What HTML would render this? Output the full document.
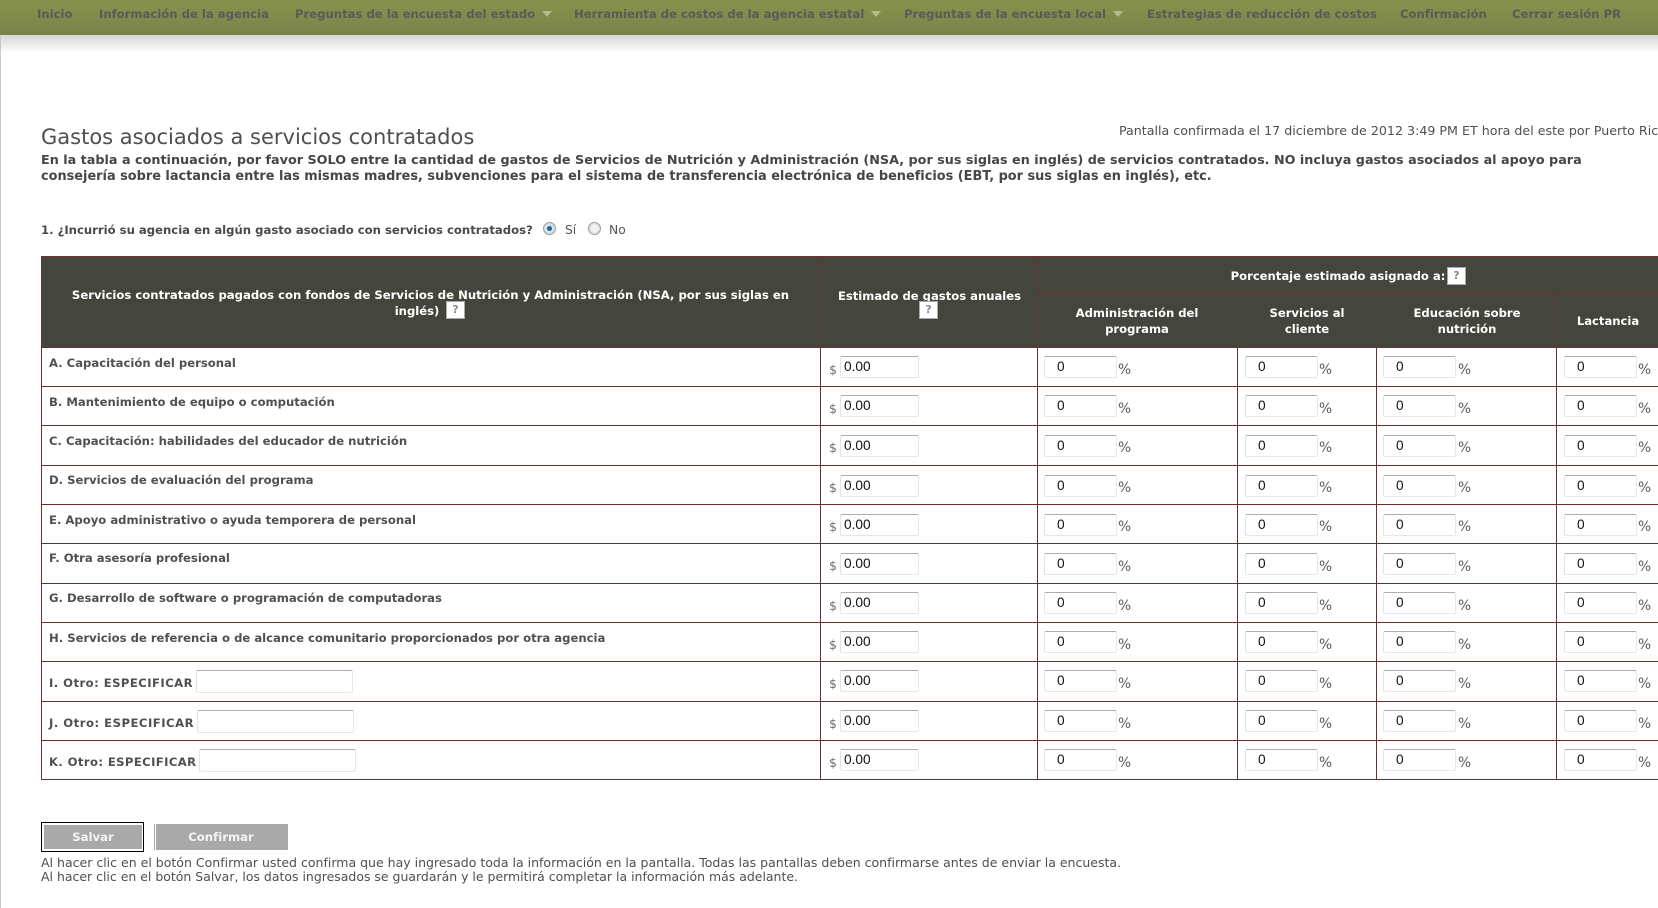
<!DOCTYPE html>
<html lang="es">
<head>
<meta charset="utf-8">
<title>Gastos asociados a servicios contratados</title>
<style>
html,body{margin:0;padding:0;background:#fff;}
body{width:1658px;height:908px;overflow:hidden;position:relative;font-family:"DejaVu Sans",Verdana,sans-serif;color:#4c4c4c;}
.a{position:absolute;white-space:nowrap;}
#edge{position:absolute;left:0;top:36px;width:1px;height:872px;background:#c8c8c8;}
#nav{position:absolute;left:0;top:0;width:1658px;height:35px;background:linear-gradient(#87934c,#79834a);}
#navline{position:absolute;left:0;top:35px;width:1658px;height:1px;background:#d9dcbc;}
#shadow{position:absolute;left:0;top:36px;width:1658px;height:17px;background:linear-gradient(#d8d8d8,#fff);}
.n{position:absolute;top:6px;font-size:11.65px;line-height:16px;font-weight:bold;color:#5a5a58;white-space:nowrap;}
.t{position:absolute;top:11px;width:0;height:0;border-left:5.5px solid transparent;border-right:5.5px solid transparent;border-top:6px solid #b4ba8c;}
h1{position:absolute;left:41px;top:125px;margin:0;font-size:21px;line-height:24px;font-weight:normal;color:#4f4f4f;white-space:nowrap;}
.b{font-weight:bold;line-height:16px;color:#464646;}
#head{position:absolute;left:41px;top:256px;width:1617px;height:92px;background:#44463d;border-top:1px solid #6b3030;box-sizing:border-box;}
.h{position:absolute;color:#fff;font-weight:bold;font-size:11.6px;line-height:16px;text-align:center;white-space:nowrap;transform:translateX(-50%);}
.q{position:absolute;width:19px;height:18px;background:#fff;border:1px solid #aaa;box-sizing:border-box;color:#8a8a8a;font-size:11px;font-weight:bold;line-height:16px;text-align:center;}
.hl{position:absolute;background:#6b3030;}
.r{position:absolute;left:41px;width:1617px;border-bottom:1px solid #6b3030;box-sizing:border-box;}
.l{position:absolute;left:8px;top:7px;font-size:11.63px;line-height:16px;font-weight:bold;color:#505050;white-space:nowrap;}
input{position:absolute;box-sizing:border-box;margin:0;height:22px;border:1px solid #e3e7ee;border-top-color:#abadb3;border-left-color:#e2e3ea;border-radius:2px;background:#fff;font-family:"Liberation Sans",Arial,sans-serif;font-size:13.7px;color:#111;outline:none;}
.d{left:799px;width:79px;padding:0 0 1px 3px;top:8px;}
.p{width:73px;padding:0 0 1px 12px;top:8px;}
.u input{top:9px;}
.f6 .s{top:15px;}
.f6 .c{top:16px;}
.p1{left:1003px;}.p2{left:1204px;}.p3{left:1342px;}.p4{left:1523px;}
.s{position:absolute;left:788px;top:15px;font-size:12.5px;line-height:14px;color:#6a6f78;font-style:normal;}
.c{position:absolute;top:15px;font-size:13.8px;line-height:14px;color:#5a5a5a;font-style:normal;}
.c1{left:1077px;}.c2{left:1278px;}.c3{left:1417px;}.c4{left:1597px;}
.x{position:absolute;top:8px;height:23px;width:157px;padding:0;}
.o{position:absolute;top:13px;left:8px;font-size:11.63px;line-height:16px;font-weight:bold;color:#505050;white-space:nowrap;}
.vl{position:absolute;width:1px;background:#6b3030;top:348px;height:432px;}
.btn{position:absolute;background:#a9a9a9;color:#f4f4f4;font-weight:bold;font-size:11.7px;text-align:center;box-sizing:border-box;}
.rad{position:absolute;width:13px;height:13px;border-radius:50%;box-sizing:border-box;border:1px solid #9a9ea3;background:radial-gradient(circle,#f4f4f4 35%,#c4c8cb 100%);}
.rad.on{background:radial-gradient(circle,#0f5f9c 0,#1b76b8 30%,#dfe6ea 36%,#c8ccd0 100%);}
.f{line-height:14px;color:#4f4f4f;}
</style>
</head>
<body>
<div id="shadow"></div>
<div id="edge"></div>
<div id="nav"></div>
<div id="navline"></div>
<span class="n" style="left:37px">Inicio</span>
<span class="n" style="left:99px">Información de la agencia</span>
<span class="n" style="left:295px">Preguntas de la encuesta del estado</span>
<span class="t" style="left:542px"></span>
<span class="n" style="left:574px">Herramienta de costos de la agencia estatal</span>
<span class="t" style="left:871px"></span>
<span class="n" style="left:904px">Preguntas de la encuesta local</span>
<span class="t" style="left:1113px"></span>
<span class="n" style="left:1147px">Estrategias de reducción de costos</span>
<span class="n" style="left:1400px">Confirmación</span>
<span class="n" style="left:1512px">Cerrar sesión PR</span>

<h1>Gastos asociados a servicios contratados</h1>
<div class="a" style="left:1119px;top:123px;font-size:12.65px;line-height:16px;color:#4f4f4f;">Pantalla confirmada el 17 diciembre de 2012 3:49 PM ET hora del este por Puerto Rico</div>
<div class="a b" style="left:41px;top:153px;font-size:12.77px;">En la tabla a continuación, por favor SOLO entre la cantidad de gastos de Servicios de Nutrición y Administración (NSA, por sus siglas en inglés) de servicios contratados. NO incluya gastos asociados al apoyo para</div>
<div class="a b" style="left:41px;top:169px;font-size:12.88px;">consejería sobre lactancia entre las mismas madres, subvenciones para el sistema de transferencia electrónica de beneficios (EBT, por sus siglas en inglés), etc.</div>

<div class="a" style="left:41px;top:222px;font-size:11.65px;line-height:16px;font-weight:bold;color:#4a4a4a;">1. ¿Incurrió su agencia en algún gasto asociado con servicios contratados?</div>
<span class="rad on" style="left:543px;top:222px"></span>
<span class="a" style="left:565px;top:222px;font-size:12.3px;line-height:16px;color:#555;">Sí</span>
<span class="rad" style="left:588px;top:222px"></span>
<span class="a" style="left:609px;top:222px;font-size:12.3px;line-height:16px;color:#555;">No</span>

<div id="head"></div>
<div class="hl" style="left:41px;top:256px;width:1px;height:524px"></div>
<div class="hl" style="left:820px;top:256px;width:1px;height:92px"></div>
<div class="hl" style="left:1037px;top:256px;width:1px;height:92px"></div>
<div class="hl" style="left:1037px;top:293px;width:621px;height:1px"></div>
<div class="hl" style="left:1556px;top:293px;width:1px;height:55px"></div>
<div class="hl" style="left:41px;top:347px;width:1617px;height:1px"></div>

<div class="h" style="left:430.5px;top:287px;font-size:11.65px">Servicios contratados pagados con fondos de Servicios de Nutrición y Administración (NSA, por sus siglas en</div>
<div class="h" style="left:417px;top:303px">inglés)</div>
<div class="q" style="left:446px;top:301px">?</div>
<div class="h" style="left:929.5px;top:288px">Estimado de gastos anuales</div>
<div class="q" style="left:919px;top:301px">?</div>
<div class="h" style="left:1338px;top:268px">Porcentaje estimado asignado a:</div>
<div class="q" style="left:1447px;top:267px">?</div>
<div class="h" style="left:1137px;top:305px">Administración del<br>programa</div>
<div class="h" style="left:1307px;top:305px">Servicios al<br>cliente</div>
<div class="h" style="left:1467px;top:305px">Educación sobre<br>nutrición</div>
<div class="h" style="left:1608px;top:313px">Lactancia</div>

<div class="r" style="top:348px;height:39px"><span class="l">A. Capacitación del personal</span><i class="s">$</i><input class="d" value="0.00"><input class="p p1" value="0"><i class="c c1">%</i><input class="p p2" value="0"><i class="c c2">%</i><input class="p p3" value="0"><i class="c c3">%</i><input class="p p4" value="0"><i class="c c4">%</i></div>
<div class="r" style="top:387px;height:39px"><span class="l">B. Mantenimiento de equipo o computación</span><i class="s">$</i><input class="d" value="0.00"><input class="p p1" value="0"><i class="c c1">%</i><input class="p p2" value="0"><i class="c c2">%</i><input class="p p3" value="0"><i class="c c3">%</i><input class="p p4" value="0"><i class="c c4">%</i></div>
<div class="r u" style="top:426px;height:40px"><span class="l">C. Capacitación: habilidades del educador de nutrición</span><i class="s">$</i><input class="d" value="0.00"><input class="p p1" value="0"><i class="c c1">%</i><input class="p p2" value="0"><i class="c c2">%</i><input class="p p3" value="0"><i class="c c3">%</i><input class="p p4" value="0"><i class="c c4">%</i></div>
<div class="r u" style="top:466px;height:39px"><span class="l" style="top:6px">D. Servicios de evaluación del programa</span><i class="s">$</i><input class="d" value="0.00"><input class="p p1" value="0"><i class="c c1">%</i><input class="p p2" value="0"><i class="c c2">%</i><input class="p p3" value="0"><i class="c c3">%</i><input class="p p4" value="0"><i class="c c4">%</i></div>
<div class="r u" style="top:505px;height:39px"><span class="l">E. Apoyo administrativo o ayuda temporera de personal</span><i class="s">$</i><input class="d" value="0.00"><input class="p p1" value="0"><i class="c c1">%</i><input class="p p2" value="0"><i class="c c2">%</i><input class="p p3" value="0"><i class="c c3">%</i><input class="p p4" value="0"><i class="c c4">%</i></div>
<div class="r u f6" style="top:544px;height:40px"><span class="l" style="top:6px">F. Otra asesoría profesional</span><i class="s">$</i><input class="d" value="0.00"><input class="p p1" value="0"><i class="c c1">%</i><input class="p p2" value="0"><i class="c c2">%</i><input class="p p3" value="0"><i class="c c3">%</i><input class="p p4" value="0"><i class="c c4">%</i></div>
<div class="r" style="top:584px;height:39px"><span class="l" style="top:6px">G. Desarrollo de software o programación de computadoras</span><i class="s">$</i><input class="d" value="0.00"><input class="p p1" value="0"><i class="c c1">%</i><input class="p p2" value="0"><i class="c c2">%</i><input class="p p3" value="0"><i class="c c3">%</i><input class="p p4" value="0"><i class="c c4">%</i></div>
<div class="r" style="top:623px;height:39px"><span class="l">H. Servicios de referencia o de alcance comunitario proporcionados por otra agencia</span><i class="s">$</i><input class="d" value="0.00"><input class="p p1" value="0"><i class="c c1">%</i><input class="p p2" value="0"><i class="c c2">%</i><input class="p p3" value="0"><i class="c c3">%</i><input class="p p4" value="0"><i class="c c4">%</i></div>
<div class="r" style="top:662px;height:40px"><span class="o" style="letter-spacing:.45px">I. Otro: ESPECIFICAR</span><input class="x" style="left:155px" value=""><i class="s">$</i><input class="d" value="0.00"><input class="p p1" value="0"><i class="c c1">%</i><input class="p p2" value="0"><i class="c c2">%</i><input class="p p3" value="0"><i class="c c3">%</i><input class="p p4" value="0"><i class="c c4">%</i></div>
<div class="r" style="top:702px;height:39px"><span class="o" style="letter-spacing:.5px">J. Otro: ESPECIFICAR</span><input class="x" style="left:156px" value=""><i class="s">$</i><input class="d" value="0.00"><input class="p p1" value="0"><i class="c c1">%</i><input class="p p2" value="0"><i class="c c2">%</i><input class="p p3" value="0"><i class="c c3">%</i><input class="p p4" value="0"><i class="c c4">%</i></div>
<div class="r" style="top:741px;height:39px"><span class="o" style="letter-spacing:.39px">K. Otro: ESPECIFICAR</span><input class="x" style="left:158px" value=""><i class="s">$</i><input class="d" value="0.00"><input class="p p1" value="0"><i class="c c1">%</i><input class="p p2" value="0"><i class="c c2">%</i><input class="p p3" value="0"><i class="c c3">%</i><input class="p p4" value="0"><i class="c c4">%</i></div>

<div class="vl" style="left:820px"></div>
<div class="vl" style="left:1037px"></div>
<div class="vl" style="left:1237px"></div>
<div class="vl" style="left:1376px"></div>
<div class="vl" style="left:1556px"></div>

<div class="a" style="left:41px;top:822px;width:103px;height:30px;border:1px solid #000;box-sizing:border-box;background:#fff;"></div>
<div class="btn" style="left:44px;top:825px;width:98px;height:24px;line-height:24px;">Salvar</div>
<div class="btn" style="left:154px;top:824px;width:134px;height:26px;line-height:26px;"><span style="position:absolute;left:1px;top:0;width:1px;height:26px;background:#fff"></span>Confirmar</div>

<div class="a f" style="left:41px;top:856px;font-size:12.53px;">Al hacer clic en el botón Confirmar usted confirma que hay ingresado toda la información en la pantalla. Todas las pantallas deben confirmarse antes de enviar la encuesta.</div>
<div class="a f" style="left:41px;top:870px;font-size:12.47px;">Al hacer clic en el botón Salvar, los datos ingresados se guardarán y le permitirá completar la información más adelante.</div>
</body>
</html>
